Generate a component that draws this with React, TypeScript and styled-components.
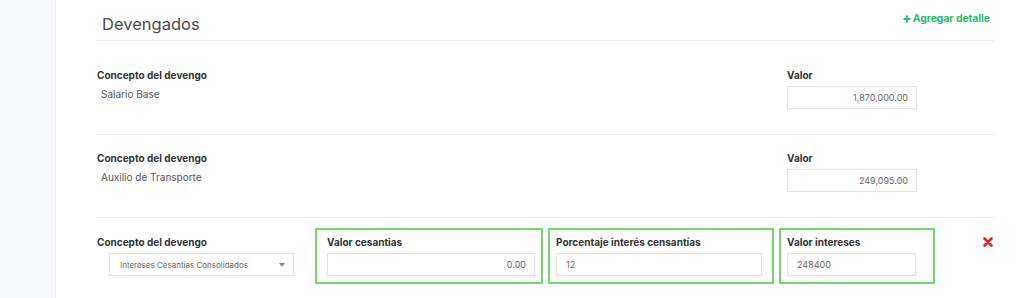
import React from 'react';
import styled, { createGlobalStyle } from 'styled-components';

const GlobalStyle = createGlobalStyle`
  html, body {
    margin: 0;
    padding: 0;
    background: #ffffff;
    font-family: Inter, "Noto Sans", "Liberation Sans", sans-serif;
  }
`;

const Page = styled.div`
  display: flex;
  height: 298px;
  overflow: hidden;
`;

const Sidebar = styled.div`
  width: 55px;
  flex-shrink: 0;
  background: #f7f9fc;
  border-right: 1px solid #eceff4;
`;

const Main = styled.div`
  flex: 1;
  padding: 0 30px 0 40px;
`;

const Header = styled.div`
  display: flex;
  align-items: center;
  justify-content: space-between;
  height: 40px;
  border-bottom: 1px solid #efefef;
  margin-bottom: 11px;
`;

const Title = styled.h2`
  margin: 0 0 0 6px;
  padding-top: 7px;
  font-size: 16.5px;
  font-weight: 400;
  color: #4a4a4a;
`;

const AddLink = styled.a`
  display: flex;
  align-items: center;
  gap: 2px;
  margin: 0 4px 3px 0;
  font-size: 10.5px;
  font-weight: 700;
  letter-spacing: -0.1px;
  color: #2dbd6b;
  text-decoration: none;
  cursor: pointer;
`;

const Row = styled.div<{ $last?: boolean }>`
  display: grid;
  grid-template-columns: 214px 228px 226px 156px 1fr;
  column-gap: 5px;
  align-items: start;
  padding: ${(p) => (p.$last ? '10px 0 0' : '17px 0 25px')};
  border-bottom: ${(p) => (p.$last ? 'none' : '1px solid #efefef')};
`;

const Field = styled.div<{ $left?: number; $right?: number; $top?: number }>`
  padding: ${(p) => p.$top ?? 0}px ${(p) => p.$right ?? 0}px 0 ${(p) => p.$left ?? 0}px;
`;

const HighlightBox = styled.div<{ $left: number; $right: number }>`
  border: 2px solid #73d66a;
  padding: 6px ${(p) => p.$right}px 6px ${(p) => p.$left}px;
`;

const Label = styled.div`
  font-size: 10px;
  font-weight: 700;
  color: #333333;
  line-height: 13px;
  margin-bottom: 4px;
`;

const PlainValue = styled.div`
  font-size: 10px;
  color: #555555;
  padding-left: 4px;
  line-height: 16px;
`;

const Input = styled.div<{ $align?: 'left' | 'right' }>`
  box-sizing: border-box;
  height: 23px;
  border: 1px solid #e2e2e2;
  display: flex;
  align-items: center;
  justify-content: ${(p) => (p.$align === 'left' ? 'flex-start' : 'flex-end')};
  padding: ${(p) => (p.$align === 'left' ? '0 8px 0 9px' : '0 8px 0 9px')};
  font-size: 9px;
  color: #666666;
  background: #ffffff;
`;

const Select = styled.div`
  box-sizing: border-box;
  margin-left: 12px;
  width: 185px;
  height: 23px;
  border: 1px solid #e2e2e2;
  display: flex;
  align-items: center;
  justify-content: space-between;
  padding: 0 8px 0 10px;
  font-size: 8px;
  color: #666666;
`;

const Caret = styled.span`
  width: 0;
  height: 0;
  border-left: 3px solid transparent;
  border-right: 3px solid transparent;
  border-top: 4px solid #888888;
`;

const RemoveCell = styled.div`
  display: flex;
  justify-content: flex-end;
  padding-top: 9px;
  padding-right: 1px;
`;

const RemoveButton = styled.button`
  border: 0;
  background: none;
  padding: 0;
  cursor: pointer;
  display: flex;
`;

function PlusIcon() {
  return (
    <svg width="8" height="8" viewBox="0 0 8 8">
      <path d="M4 0.5v7M0.5 4h7" stroke="#2dbd6b" strokeWidth="2" />
    </svg>
  );
}

function CrossIcon() {
  return (
    <svg width="10" height="10" viewBox="0 0 10 10">
      <path d="M1.5 1.5l7 7M8.5 1.5l-7 7" stroke="#e3231f" strokeWidth="2.6" strokeLinecap="round" />
    </svg>
  );
}

const fixedRows = [
  { concepto: 'Salario Base', valor: '1,870,000.00' },
  { concepto: 'Auxilio de Transporte', valor: '249,095.00' },
];

export default function App() {
  return (
    <>
      <GlobalStyle />
      <Page>
        <Sidebar />
        <Main>
          <Header>
            <Title>Devengados</Title>
            <AddLink>
              <PlusIcon />
              Agregar detalle
            </AddLink>
          </Header>

          {fixedRows.map((row) => (
            <Row key={row.concepto}>
              <Field $left={1}>
                <Label>Concepto del devengo</Label>
                <PlainValue>{row.concepto}</PlainValue>
              </Field>
              <div />
              <div />
              <Field $left={8} $right={18}>
                <Label>Valor</Label>
                <Input>{row.valor}</Input>
              </Field>
              <div />
            </Row>
          ))}

          <Row $last>
            <Field $left={1} $top={8}>
              <Label>Concepto del devengo</Label>
              <Select>
                Intereses Cesantias Consolidados
                <Caret />
              </Select>
            </Field>
            <HighlightBox $left={10} $right={6}>
              <Label>Valor cesantias</Label>
              <Input>0.00</Input>
            </HighlightBox>
            <HighlightBox $left={6} $right={10}>
              <Label>Porcentaje interés censantías</Label>
              <Input $align="left">12</Input>
            </HighlightBox>
            <HighlightBox $left={6} $right={17}>
              <Label>Valor intereses</Label>
              <Input $align="left">248400</Input>
            </HighlightBox>
            <RemoveCell>
              <RemoveButton>
                <CrossIcon />
              </RemoveButton>
            </RemoveCell>
          </Row>
        </Main>
      </Page>
    </>
  );
}
